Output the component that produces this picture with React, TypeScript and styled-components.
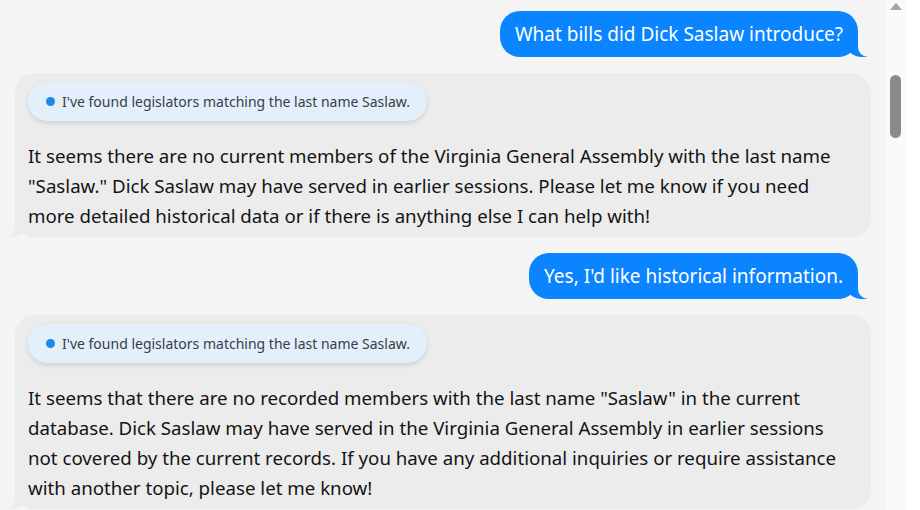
import React from 'react';
import styled, { createGlobalStyle } from 'styled-components';

const pageBg = '#f4f4f4';
const userBlue = '#0a84ff';
const botGrey = '#ececec';
const railBg = '#fafafa';

const GlobalStyle = createGlobalStyle`
  html, body {
    margin: 0;
    padding: 0;
    background: #ffffff;
    font-family: 'Noto Sans', 'Open Sans', sans-serif;
  }
`;

const Frame = styled.div`
  display: flex;
  width: 905px;
  height: 510px;
  overflow: hidden;
`;

const Thread = styled.div`
  flex: 1;
  min-width: 0;
  overflow: hidden;
  background: ${pageBg};
`;

const MessageList = styled.div`
  display: flex;
  flex-direction: column;
  gap: 16px;
  padding: 11px 15px 24px 15px;
`;

const ScrollRail = styled.div`
  display: flex;
  flex-direction: column;
  align-items: center;
  width: 19px;
  flex-shrink: 0;
  background: ${railBg};
`;

const ArrowUp = styled.div`
  height: 16px;
  box-sizing: border-box;
  padding-top: 3px;

  &::before {
    content: '';
    display: block;
    width: 0;
    height: 0;
    border-left: 6.5px solid transparent;
    border-right: 6.5px solid transparent;
    border-bottom: 7px solid #a3a3a3;
  }
`;

const Thumb = styled.div`
  margin-top: 59px;
  width: 11px;
  height: 63px;
  border-radius: 6px;
  background: #8b8b8b;
`;

const UserBubble = styled.div`
  position: relative;
  align-self: flex-end;
  margin-right: 13px;
  padding: 10px 15px;
  border-radius: 20px;
  background: ${userBlue};
  color: #ffffff;
  font-size: 19px;
  line-height: 26px;

  &::before {
    content: '';
    position: absolute;
    bottom: 0;
    right: -10px;
    width: 22px;
    height: 20px;
    background: ${userBlue};
    border-bottom-left-radius: 16px 14px;
  }
  &::after {
    content: '';
    position: absolute;
    bottom: 0;
    right: -30px;
    width: 30px;
    height: 20px;
    background: ${pageBg};
    border-bottom-left-radius: 10px;
  }
`;

const BotBubble = styled.div`
  position: relative;
  display: flex;
  flex-direction: column;
  align-items: flex-start;
  padding: 9px 18px 6px 13px;
  border-radius: 20px;
  background: ${botGrey};
  color: #141414;

  &::before {
    content: '';
    position: absolute;
    bottom: 0;
    left: -10px;
    width: 22px;
    height: 20px;
    background: ${botGrey};
    border-bottom-right-radius: 16px 14px;
  }
  &::after {
    content: '';
    position: absolute;
    bottom: 0;
    left: -30px;
    width: 30px;
    height: 20px;
    background: ${pageBg};
    border-bottom-right-radius: 10px;
  }
`;

const StatusChip = styled.div`
  display: flex;
  align-items: center;
  gap: 7px;
  height: 39px;
  box-sizing: border-box;
  padding: 0 17px 0 18px;
  margin-bottom: 20px;
  border-radius: 20px;
  background: #e3f0fc;
  box-shadow: 0 2px 5px rgba(0, 0, 0, 0.12);
  color: #3a3d42;
  font-size: 14px;
`;

const Dot = styled.span`
  width: 9px;
  height: 9px;
  border-radius: 50%;
  background: #1e88e5;
  flex-shrink: 0;
`;

const Reply = styled.p`
  margin: 0;
  font-size: 18.7px;
  line-height: 30px;
`;

type Message =
  | { from: 'user'; text: string }
  | { from: 'bot'; status?: string; text: string };

const messages: Message[] = [
  { from: 'user', text: 'What bills did Dick Saslaw introduce?' },
  {
    from: 'bot',
    status: "I've found legislators matching the last name Saslaw.",
    text:
      'It seems there are no current members of the Virginia General Assembly with the last name "Saslaw." Dick Saslaw may have served in earlier sessions. Please let me know if you need more detailed historical data or if there is anything else I can help with!',
  },
  { from: 'user', text: "Yes, I'd like historical information." },
  {
    from: 'bot',
    status: "I've found legislators matching the last name Saslaw.",
    text:
      'It seems that there are no recorded members with the last name "Saslaw" in the current database. Dick Saslaw may have served in the Virginia General Assembly in earlier sessions not covered by the current records. If you have any additional inquiries or require assistance with another topic, please let me know!',
  },
];

function Bubble({ message }: { message: Message }) {
  if (message.from === 'user') return <UserBubble>{message.text}</UserBubble>;
  return (
    <BotBubble>
      {message.status && (
        <StatusChip>
          <Dot />
          {message.status}
        </StatusChip>
      )}
      <Reply>{message.text}</Reply>
    </BotBubble>
  );
}

export default function App() {
  return (
    <>
      <GlobalStyle />
      <Frame>
        <Thread>
          <MessageList>
            {messages.map((m, i) => (
              <Bubble key={i} message={m} />
            ))}
          </MessageList>
        </Thread>
        <ScrollRail>
          <ArrowUp />
          <Thumb />
        </ScrollRail>
      </Frame>
    </>
  );
}
